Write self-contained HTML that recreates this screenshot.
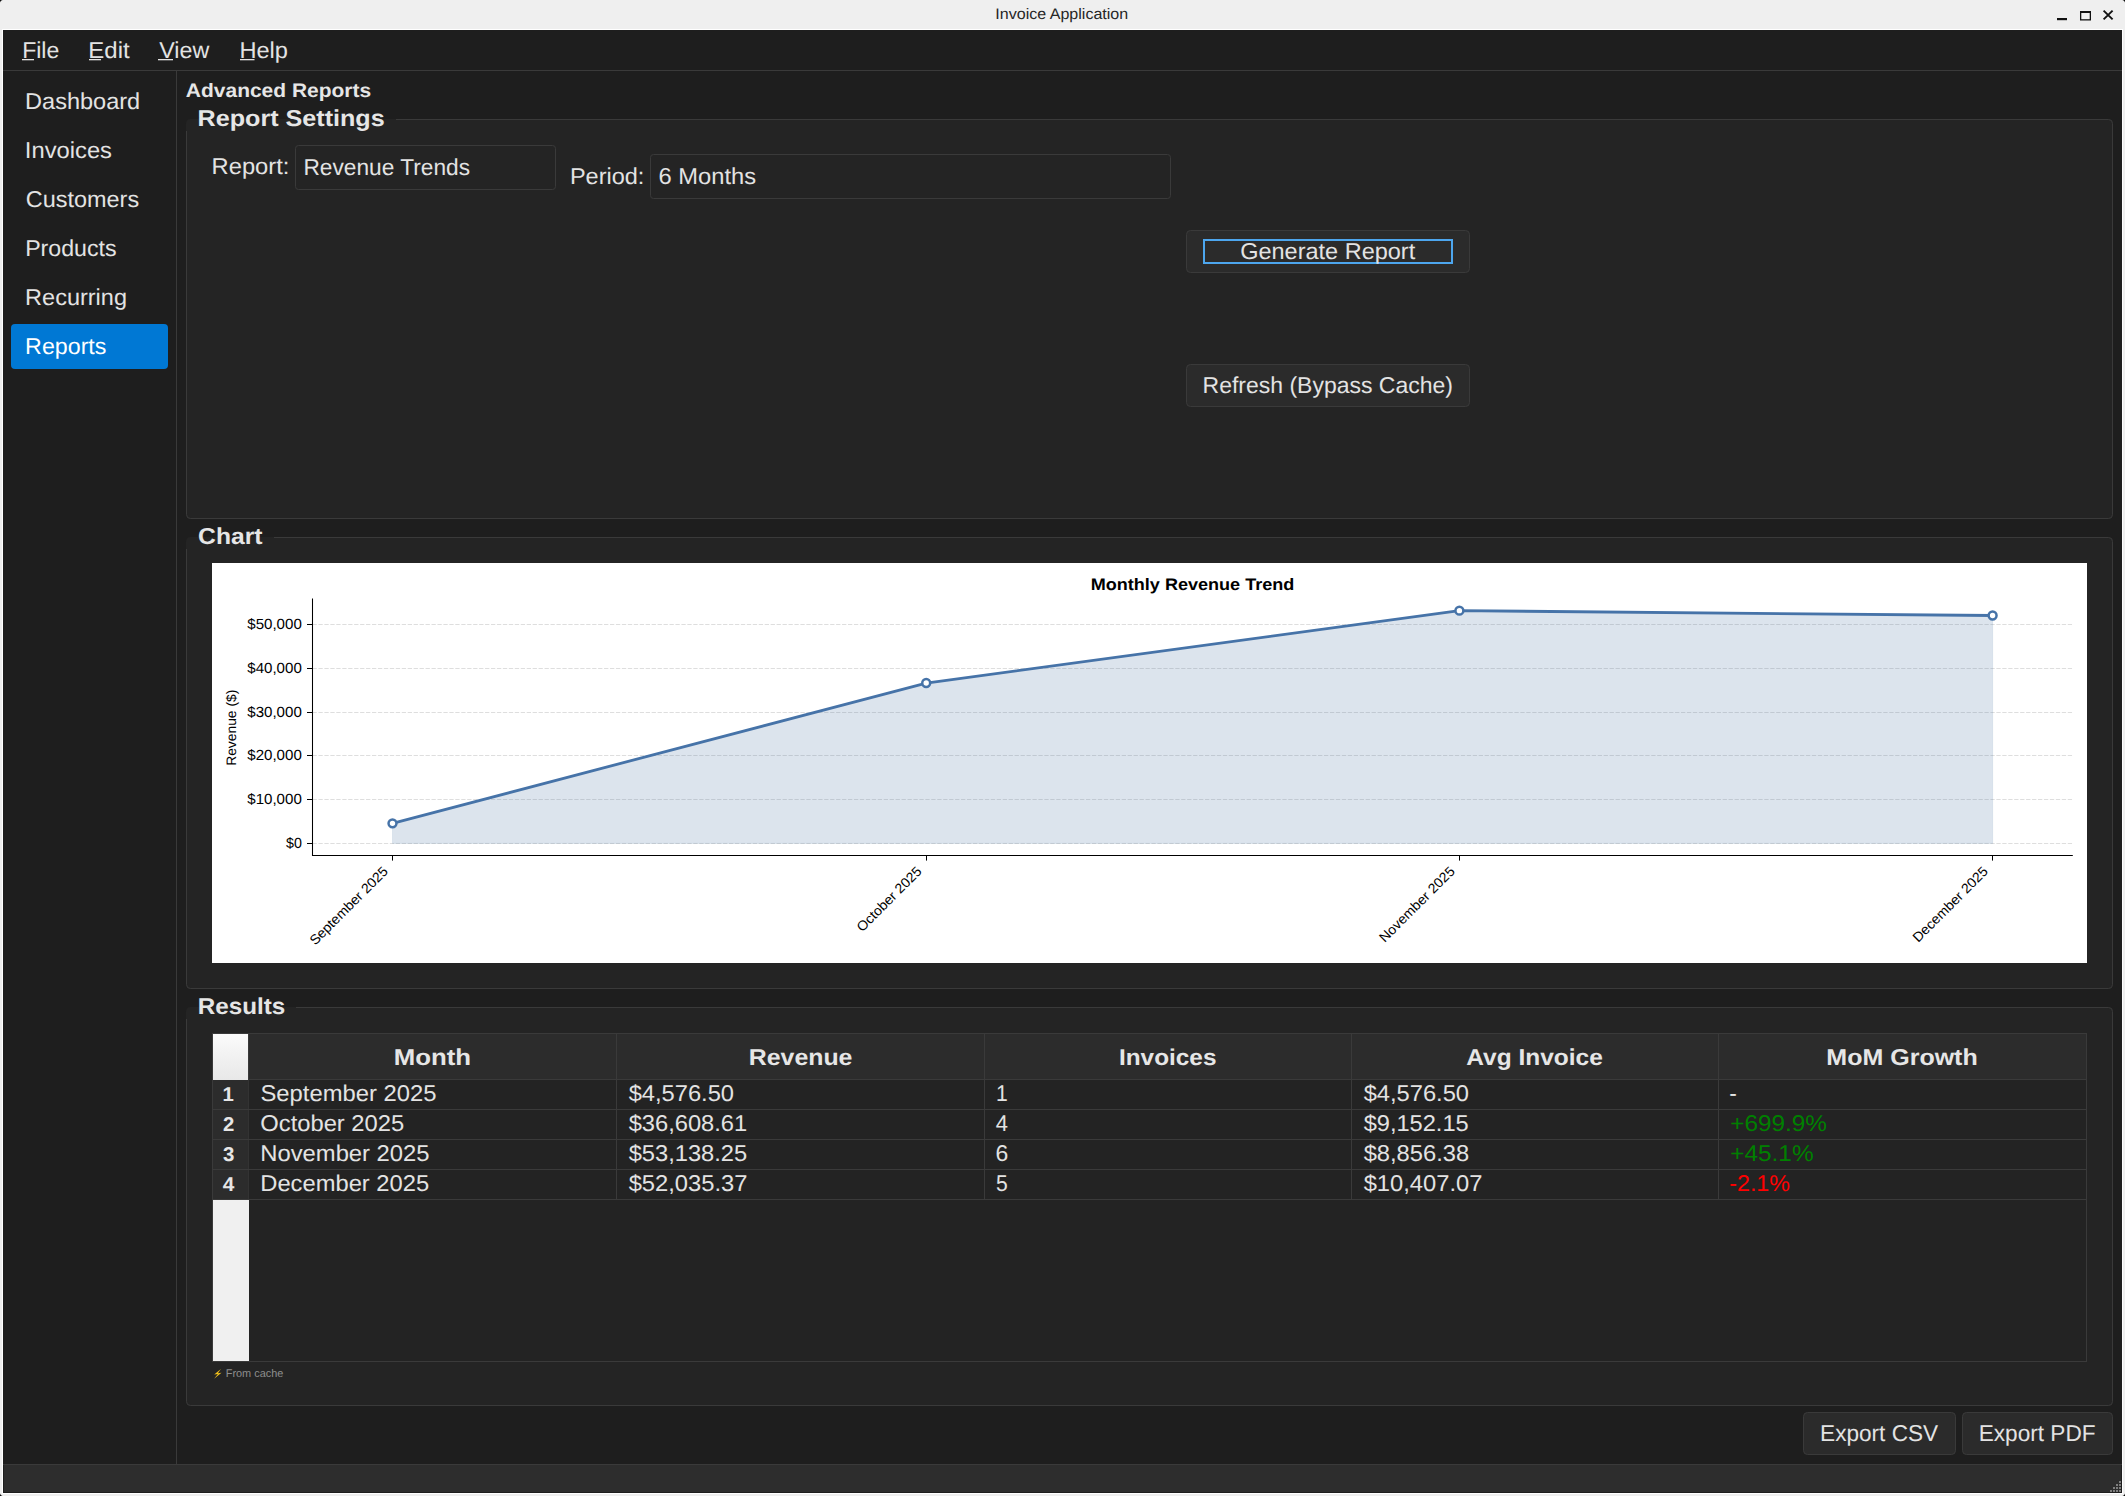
<!DOCTYPE html>
<html><head><meta charset="utf-8"><title>Invoice Application</title>
<style>
html,body{margin:0;padding:0;background:#efefef;overflow:hidden;}
svg{display:block;}
text{font-family:"Liberation Sans",sans-serif;}
</style></head>
<body>
<svg width="2125" height="1496" viewBox="0 0 2125 1496" text-rendering="geometricPrecision">
<rect x="0.00" y="0.00" width="2125.00" height="1496.00" fill="#efefef"/>
<text x="995.36" y="19.20" font-size="15.25" fill="#262626" textLength="132.86" lengthAdjust="spacingAndGlyphs">Invoice Application</text>
<rect x="2057.00" y="18.00" width="10.00" height="2.20" fill="#111"/>
<rect x="2080.65" y="11.65" width="9.70" height="8.20" fill="none" stroke="#111" stroke-width="1.3"/>
<rect x="2080.00" y="11.00" width="11.00" height="2.00" fill="#111"/>
<path d="M2103.6 10.6 L2112.6 19.4 M2112.6 10.6 L2103.6 19.4" stroke="#111" stroke-width="1.9" fill="none"/>
<rect x="2.00" y="29.00" width="2121.00" height="1465.00" fill="#ffffff"/>
<rect x="3.00" y="30.00" width="2119.00" height="1463.00" fill="#1e1e1e"/>
<line x1="3.00" y1="70.50" x2="2122.00" y2="70.50" stroke="#3a3a3a" stroke-width="1"/>
<text x="22.15" y="57.90" font-size="23.00" fill="#e3e3e3" textLength="37.20" lengthAdjust="spacingAndGlyphs">File</text>
<rect x="22.00" y="59.00" width="12.00" height="1.30" fill="#e3e3e3"/>
<text x="88.38" y="57.90" font-size="23.00" fill="#e3e3e3" textLength="41.31" lengthAdjust="spacingAndGlyphs">Edit</text>
<rect x="89.00" y="59.00" width="12.00" height="1.30" fill="#e3e3e3"/>
<text x="159.28" y="57.90" font-size="23.00" fill="#e3e3e3" textLength="50.01" lengthAdjust="spacingAndGlyphs">View</text>
<rect x="158.00" y="59.00" width="15.00" height="1.30" fill="#e3e3e3"/>
<text x="239.41" y="57.90" font-size="23.00" fill="#e3e3e3" textLength="48.57" lengthAdjust="spacingAndGlyphs">Help</text>
<rect x="240.00" y="59.00" width="14.50" height="1.30" fill="#e3e3e3"/>
<line x1="176.50" y1="71.00" x2="176.50" y2="1464.00" stroke="#3a3a3a" stroke-width="1"/>
<rect x="11.00" y="324.00" width="157.00" height="45.00" fill="#0078d4" rx="4"/>
<text x="25.12" y="109.00" font-size="23.00" fill="#e3e3e3" textLength="115.05" lengthAdjust="spacingAndGlyphs">Dashboard</text>
<text x="24.86" y="158.05" font-size="23.00" fill="#e3e3e3" textLength="87.13" lengthAdjust="spacingAndGlyphs">Invoices</text>
<text x="25.83" y="207.10" font-size="23.00" fill="#e3e3e3" textLength="113.28" lengthAdjust="spacingAndGlyphs">Customers</text>
<text x="25.15" y="256.15" font-size="23.00" fill="#e3e3e3" textLength="91.50" lengthAdjust="spacingAndGlyphs">Products</text>
<text x="25.12" y="305.20" font-size="23.00" fill="#e3e3e3" textLength="101.89" lengthAdjust="spacingAndGlyphs">Recurring</text>
<text x="25.14" y="354.25" font-size="23.00" fill="#ffffff" textLength="81.31" lengthAdjust="spacingAndGlyphs">Reports</text>
<text x="185.88" y="96.90" font-size="19.48" font-weight="bold" fill="#e6e6e6" textLength="185.28" lengthAdjust="spacingAndGlyphs">Advanced Reports</text>
<rect x="186.00" y="119.00" width="1927.00" height="400.00" fill="#242424" rx="4.5"/>
<path d="M396.0 119.5 H2108.5 A4 4 0 0 1 2112.5 123.5 V514.5 A4 4 0 0 1 2108.5 518.5 H190.5 A4 4 0 0 1 186.5 514.5 V131" fill="none" stroke="#3a3a3a" stroke-width="1"/>
<text x="197.57" y="125.80" font-size="23.00" font-weight="bold" fill="#e6e6e6" textLength="187.14" lengthAdjust="spacingAndGlyphs">Report Settings</text>
<rect x="186.00" y="537.00" width="1927.00" height="452.00" fill="#242424" rx="4.5"/>
<path d="M274.0 537.5 H2108.5 A4 4 0 0 1 2112.5 541.5 V984.5 A4 4 0 0 1 2108.5 988.5 H190.5 A4 4 0 0 1 186.5 984.5 V549" fill="none" stroke="#3a3a3a" stroke-width="1"/>
<text x="198.11" y="543.90" font-size="23.00" font-weight="bold" fill="#e6e6e6" textLength="64.37" lengthAdjust="spacingAndGlyphs">Chart</text>
<rect x="186.00" y="1007.00" width="1927.00" height="399.00" fill="#242424" rx="4.5"/>
<path d="M296.0 1007.5 H2108.5 A4 4 0 0 1 2112.5 1011.5 V1401.5 A4 4 0 0 1 2108.5 1405.5 H190.5 A4 4 0 0 1 186.5 1401.5 V1019" fill="none" stroke="#3a3a3a" stroke-width="1"/>
<text x="197.73" y="1014.30" font-size="23.00" font-weight="bold" fill="#e6e6e6" textLength="87.50" lengthAdjust="spacingAndGlyphs">Results</text>
<text x="211.60" y="174.40" font-size="23.00" fill="#e3e3e3" textLength="77.82" lengthAdjust="spacingAndGlyphs">Report:</text>
<rect x="295.50" y="145.50" width="260.00" height="44.00" fill="#242424" rx="3" stroke="#3a3a3a" stroke-width="1"/>
<text x="303.38" y="174.90" font-size="23.00" fill="#e3e3e3" textLength="166.67" lengthAdjust="spacingAndGlyphs">Revenue Trends</text>
<text x="569.92" y="183.60" font-size="23.00" fill="#e3e3e3" textLength="74.46" lengthAdjust="spacingAndGlyphs">Period:</text>
<rect x="650.50" y="154.50" width="520.00" height="44.00" fill="#242424" rx="3" stroke="#3a3a3a" stroke-width="1"/>
<text x="658.51" y="184.20" font-size="23.00" fill="#e3e3e3" textLength="97.58" lengthAdjust="spacingAndGlyphs">6 Months</text>
<rect x="1186.50" y="230.50" width="283.00" height="42.00" fill="#2b2b2b" rx="4" stroke="#3a3a3a" stroke-width="1"/>
<rect x="1204.00" y="240.00" width="248.00" height="23.00" fill="none" stroke="#4da6ee" stroke-width="2"/>
<text x="1240.23" y="259.10" font-size="23.00" fill="#e3e3e3" textLength="174.98" lengthAdjust="spacingAndGlyphs">Generate Report</text>
<rect x="1186.50" y="364.50" width="283.00" height="42.00" fill="#2b2b2b" rx="4" stroke="#3a3a3a" stroke-width="1"/>
<text x="1202.56" y="392.90" font-size="23.00" fill="#e3e3e3" textLength="250.40" lengthAdjust="spacingAndGlyphs">Refresh (Bypass Cache)</text>
<rect x="212.00" y="563.00" width="1875.00" height="400.00" fill="#ffffff"/>
<line x1="312.50" y1="843.50" x2="2072.80" y2="843.50" stroke="#dadada" stroke-width="0.9" stroke-dasharray="4.3 1.65"/>
<line x1="312.50" y1="799.50" x2="2072.80" y2="799.50" stroke="#dadada" stroke-width="0.9" stroke-dasharray="4.3 1.65"/>
<line x1="312.50" y1="755.50" x2="2072.80" y2="755.50" stroke="#dadada" stroke-width="0.9" stroke-dasharray="4.3 1.65"/>
<line x1="312.50" y1="712.50" x2="2072.80" y2="712.50" stroke="#dadada" stroke-width="0.9" stroke-dasharray="4.3 1.65"/>
<line x1="312.50" y1="668.50" x2="2072.80" y2="668.50" stroke="#dadada" stroke-width="0.9" stroke-dasharray="4.3 1.65"/>
<line x1="312.50" y1="624.50" x2="2072.80" y2="624.50" stroke="#dadada" stroke-width="0.9" stroke-dasharray="4.3 1.65"/>
<polygon points="392.5,823.35 926.2,683.05 1459.4,610.65 1992.6,615.49 1992.6,843.4 392.5,843.4" fill="#4e79a7" fill-opacity="0.2" stroke="#4e79a7" stroke-opacity="0.12" stroke-width="1"/>
<polyline points="392.5,823.35 926.2,683.05 1459.4,610.65 1992.6,615.49" fill="none" stroke="#4673a8" stroke-width="2.8" stroke-linejoin="round"/>
<circle cx="392.5" cy="823.35" r="3.95" fill="#ffffff" stroke="#4673a8" stroke-width="2.5"/>
<circle cx="926.2" cy="683.05" r="3.95" fill="#ffffff" stroke="#4673a8" stroke-width="2.5"/>
<circle cx="1459.4" cy="610.65" r="3.95" fill="#ffffff" stroke="#4673a8" stroke-width="2.5"/>
<circle cx="1992.6" cy="615.49" r="3.95" fill="#ffffff" stroke="#4673a8" stroke-width="2.5"/>
<line x1="312.50" y1="598.40" x2="312.50" y2="856.00" stroke="#000" stroke-width="1.05"/>
<line x1="312.00" y1="855.50" x2="2072.80" y2="855.50" stroke="#000" stroke-width="1.05"/>
<line x1="307.00" y1="843.50" x2="312.50" y2="843.50" stroke="#000" stroke-width="1.05"/>
<text x="285.97" y="848.00" font-size="14.72" fill="#000" textLength="15.86" lengthAdjust="spacingAndGlyphs">$0</text>
<line x1="307.00" y1="799.50" x2="312.50" y2="799.50" stroke="#000" stroke-width="1.05"/>
<text x="247.28" y="804.00" font-size="14.72" fill="#000" textLength="54.54" lengthAdjust="spacingAndGlyphs">$10,000</text>
<line x1="307.00" y1="755.50" x2="312.50" y2="755.50" stroke="#000" stroke-width="1.05"/>
<text x="247.28" y="760.00" font-size="14.72" fill="#000" textLength="54.54" lengthAdjust="spacingAndGlyphs">$20,000</text>
<line x1="307.00" y1="712.50" x2="312.50" y2="712.50" stroke="#000" stroke-width="1.05"/>
<text x="247.28" y="717.00" font-size="14.72" fill="#000" textLength="54.54" lengthAdjust="spacingAndGlyphs">$30,000</text>
<line x1="307.00" y1="668.50" x2="312.50" y2="668.50" stroke="#000" stroke-width="1.05"/>
<text x="247.28" y="673.00" font-size="14.72" fill="#000" textLength="54.54" lengthAdjust="spacingAndGlyphs">$40,000</text>
<line x1="307.00" y1="624.50" x2="312.50" y2="624.50" stroke="#000" stroke-width="1.05"/>
<text x="247.28" y="629.00" font-size="14.72" fill="#000" textLength="54.54" lengthAdjust="spacingAndGlyphs">$50,000</text>
<line x1="392.50" y1="855.50" x2="392.50" y2="860.60" stroke="#000" stroke-width="1.05"/>
<line x1="926.50" y1="855.50" x2="926.50" y2="860.60" stroke="#000" stroke-width="1.05"/>
<line x1="1459.50" y1="855.50" x2="1459.50" y2="860.60" stroke="#000" stroke-width="1.05"/>
<line x1="1992.50" y1="855.50" x2="1992.50" y2="860.60" stroke="#000" stroke-width="1.05"/>
<text x="1090.69" y="590.00" font-size="16.62" font-weight="bold" fill="#000" textLength="203.61" lengthAdjust="spacingAndGlyphs">Monthly Revenue Trend</text>
<g transform="translate(236.2,727.65) rotate(-90)"><text x="-38.19" y="0.00" font-size="13.71" fill="#000" textLength="76.15" lengthAdjust="spacingAndGlyphs">Revenue ($)</text></g>
<g transform="translate(388.40,872.6) rotate(-45)"><text x="-103.63" y="0.00" font-size="13.66" fill="#000" textLength="104.19" lengthAdjust="spacingAndGlyphs">September 2025</text></g>
<g transform="translate(922.10,872.6) rotate(-45)"><text x="-84.70" y="0.00" font-size="13.66" fill="#000" textLength="85.25" lengthAdjust="spacingAndGlyphs">October 2025</text></g>
<g transform="translate(1455.30,872.6) rotate(-45)"><text x="-99.69" y="0.00" font-size="13.66" fill="#000" textLength="100.26" lengthAdjust="spacingAndGlyphs">November 2025</text></g>
<g transform="translate(1988.50,872.6) rotate(-45)"><text x="-99.44" y="0.00" font-size="13.66" fill="#000" textLength="100.01" lengthAdjust="spacingAndGlyphs">December 2025</text></g>
<rect x="212.50" y="1033.50" width="1874.00" height="328.00" fill="#232323" stroke="#3a3a3a" stroke-width="1"/>
<rect x="249.00" y="1034.00" width="1837.00" height="45.50" fill="#2c2c2c"/>
<defs><linearGradient id="cg" x1="0" y1="0" x2="0" y2="1"><stop offset="0" stop-color="#fbfbfb"/><stop offset="0.5" stop-color="#f1f1f1"/><stop offset="1" stop-color="#e8e8e8"/></linearGradient></defs>
<rect x="213.00" y="1034.00" width="36.00" height="46.00" fill="url(#cg)"/>
<rect x="213.00" y="1200.00" width="36.00" height="161.00" fill="#f0f0f0"/>
<line x1="249.00" y1="1079.50" x2="2086.00" y2="1079.50" stroke="#3a3a3a" stroke-width="1"/>
<line x1="616.50" y1="1034.00" x2="616.50" y2="1200.00" stroke="#3a3a3a" stroke-width="1"/>
<line x1="984.50" y1="1034.00" x2="984.50" y2="1200.00" stroke="#3a3a3a" stroke-width="1"/>
<line x1="1351.50" y1="1034.00" x2="1351.50" y2="1200.00" stroke="#3a3a3a" stroke-width="1"/>
<line x1="1718.50" y1="1034.00" x2="1718.50" y2="1200.00" stroke="#3a3a3a" stroke-width="1"/>
<line x1="248.50" y1="1034.00" x2="248.50" y2="1200.00" stroke="#3a3a3a" stroke-width="1"/>
<rect x="213.00" y="1080.00" width="35.50" height="29.50" fill="#2c2c2c"/>
<line x1="212.00" y1="1109.50" x2="2086.00" y2="1109.50" stroke="#3a3a3a" stroke-width="1"/>
<text x="222.59" y="1101.30" font-size="19.90" font-weight="bold" fill="#e6e6e6" textLength="11.32" lengthAdjust="spacingAndGlyphs">1</text>
<text x="260.50" y="1101.40" font-size="22.76" fill="#e3e3e3" textLength="175.87" lengthAdjust="spacingAndGlyphs">September 2025</text>
<text x="628.65" y="1101.40" font-size="22.76" fill="#e3e3e3" textLength="105.38" lengthAdjust="spacingAndGlyphs">$4,576.50</text>
<text x="995.94" y="1101.40" font-size="22.76" fill="#e3e3e3" textLength="11.74" lengthAdjust="spacingAndGlyphs">1</text>
<text x="1363.65" y="1101.40" font-size="22.76" fill="#e3e3e3" textLength="105.38" lengthAdjust="spacingAndGlyphs">$4,576.50</text>
<text x="1729.23" y="1101.40" font-size="22.76" fill="#e3e3e3" textLength="7.60" lengthAdjust="spacingAndGlyphs">-</text>
<rect x="213.00" y="1110.00" width="35.50" height="29.50" fill="#2c2c2c"/>
<line x1="212.00" y1="1139.50" x2="2086.00" y2="1139.50" stroke="#3a3a3a" stroke-width="1"/>
<text x="223.01" y="1131.30" font-size="19.90" font-weight="bold" fill="#e6e6e6" textLength="11.30" lengthAdjust="spacingAndGlyphs">2</text>
<text x="260.29" y="1131.40" font-size="22.76" fill="#e3e3e3" textLength="143.91" lengthAdjust="spacingAndGlyphs">October 2025</text>
<text x="628.65" y="1131.40" font-size="22.76" fill="#e3e3e3" textLength="118.51" lengthAdjust="spacingAndGlyphs">$36,608.61</text>
<text x="995.82" y="1131.40" font-size="22.76" fill="#e3e3e3" textLength="12.20" lengthAdjust="spacingAndGlyphs">4</text>
<text x="1363.65" y="1131.40" font-size="22.76" fill="#e3e3e3" textLength="105.07" lengthAdjust="spacingAndGlyphs">$9,152.15</text>
<text x="1730.20" y="1131.40" font-size="22.76" fill="#008000" textLength="96.82" lengthAdjust="spacingAndGlyphs">+699.9%</text>
<rect x="213.00" y="1140.00" width="35.50" height="29.50" fill="#2c2c2c"/>
<line x1="212.00" y1="1169.50" x2="2086.00" y2="1169.50" stroke="#3a3a3a" stroke-width="1"/>
<text x="223.09" y="1161.30" font-size="19.90" font-weight="bold" fill="#e6e6e6" textLength="11.36" lengthAdjust="spacingAndGlyphs">3</text>
<text x="260.30" y="1161.40" font-size="22.76" fill="#e3e3e3" textLength="169.24" lengthAdjust="spacingAndGlyphs">November 2025</text>
<text x="628.65" y="1161.40" font-size="22.76" fill="#e3e3e3" textLength="118.50" lengthAdjust="spacingAndGlyphs">$53,138.25</text>
<text x="995.53" y="1161.40" font-size="22.76" fill="#e3e3e3" textLength="12.74" lengthAdjust="spacingAndGlyphs">6</text>
<text x="1363.65" y="1161.40" font-size="22.76" fill="#e3e3e3" textLength="105.50" lengthAdjust="spacingAndGlyphs">$8,856.38</text>
<text x="1730.20" y="1161.40" font-size="22.76" fill="#008000" textLength="83.40" lengthAdjust="spacingAndGlyphs">+45.1%</text>
<rect x="213.00" y="1170.00" width="35.50" height="29.50" fill="#2c2c2c"/>
<line x1="212.00" y1="1199.50" x2="2086.00" y2="1199.50" stroke="#3a3a3a" stroke-width="1"/>
<text x="222.72" y="1191.30" font-size="19.90" font-weight="bold" fill="#e6e6e6" textLength="11.57" lengthAdjust="spacingAndGlyphs">4</text>
<text x="260.31" y="1191.40" font-size="22.76" fill="#e3e3e3" textLength="168.81" lengthAdjust="spacingAndGlyphs">December 2025</text>
<text x="628.65" y="1191.40" font-size="22.76" fill="#e3e3e3" textLength="118.74" lengthAdjust="spacingAndGlyphs">$52,035.37</text>
<text x="995.94" y="1191.40" font-size="22.76" fill="#e3e3e3" textLength="11.74" lengthAdjust="spacingAndGlyphs">5</text>
<text x="1363.65" y="1191.40" font-size="22.76" fill="#e3e3e3" textLength="118.74" lengthAdjust="spacingAndGlyphs">$10,407.07</text>
<text x="1729.21" y="1191.40" font-size="22.76" fill="#ff0000" textLength="60.77" lengthAdjust="spacingAndGlyphs">-2.1%</text>
<text x="393.72" y="1064.70" font-size="23.00" font-weight="bold" fill="#e6e6e6" textLength="77.29" lengthAdjust="spacingAndGlyphs">Month</text>
<text x="748.78" y="1064.70" font-size="23.00" font-weight="bold" fill="#e6e6e6" textLength="103.65" lengthAdjust="spacingAndGlyphs">Revenue</text>
<text x="1118.99" y="1064.70" font-size="22.76" font-weight="bold" fill="#e6e6e6" textLength="97.45" lengthAdjust="spacingAndGlyphs">Invoices</text>
<text x="1466.29" y="1064.70" font-size="23.00" font-weight="bold" fill="#e6e6e6" textLength="136.47" lengthAdjust="spacingAndGlyphs">Avg Invoice</text>
<text x="1826.38" y="1064.70" font-size="23.00" font-weight="bold" fill="#e6e6e6" textLength="151.31" lengthAdjust="spacingAndGlyphs">MoM Growth</text>
<path d="M220.9 1369.1 L214.2 1374.5 L217.9 1374.1 L214.1 1378.8 L221.5 1372.8 L217.9 1373.2 Z" fill="#f4c21b"/>
<text x="225.73" y="1377.20" font-size="11.12" fill="#8e8e8e" textLength="57.71" lengthAdjust="spacingAndGlyphs">From cache</text>
<rect x="1803.50" y="1412.50" width="152.00" height="42.00" fill="#2b2b2b" rx="4" stroke="#3a3a3a" stroke-width="1"/>
<text x="1820.09" y="1441.40" font-size="23.00" fill="#e3e3e3" textLength="118.00" lengthAdjust="spacingAndGlyphs">Export CSV</text>
<rect x="1962.50" y="1412.50" width="150.00" height="42.00" fill="#2b2b2b" rx="4" stroke="#3a3a3a" stroke-width="1"/>
<text x="1978.69" y="1441.40" font-size="23.00" fill="#e3e3e3" textLength="116.88" lengthAdjust="spacingAndGlyphs">Export PDF</text>
<rect x="4.00" y="1465.00" width="2117.00" height="27.00" fill="#2d2d2d"/>
<line x1="3.00" y1="1464.50" x2="2122.00" y2="1464.50" stroke="#3a3a3a" stroke-width="1"/>
<rect x="2119.00" y="1481.00" width="2.00" height="2.00" fill="#7e7e7e"/>
<rect x="2116.00" y="1484.00" width="2.00" height="2.00" fill="#7e7e7e"/>
<rect x="2119.00" y="1484.00" width="2.00" height="2.00" fill="#7e7e7e"/>
<rect x="2113.00" y="1487.00" width="2.00" height="2.00" fill="#7e7e7e"/>
<rect x="2116.00" y="1487.00" width="2.00" height="2.00" fill="#7e7e7e"/>
<rect x="2119.00" y="1487.00" width="2.00" height="2.00" fill="#7e7e7e"/>
<rect x="2110.00" y="1490.00" width="2.00" height="2.00" fill="#7e7e7e"/>
<rect x="2113.00" y="1490.00" width="2.00" height="2.00" fill="#7e7e7e"/>
<rect x="2116.00" y="1490.00" width="2.00" height="2.00" fill="#7e7e7e"/>
<rect x="2119.00" y="1490.00" width="2.00" height="2.00" fill="#7e7e7e"/>
<path d="M0 0 H2.6 Q0.4 0.4 0 2.6 Z" fill="#000"/>
<path d="M2125 0 V2.6 Q2124.6 0.4 2122.4 0 Z" fill="#000"/>
<path d="M0 1496 V1493.4 Q0.4 1495.6 2.6 1496 Z" fill="#000"/>
<path d="M2125 1496 H2122.4 Q2124.6 1495.6 2125 1493.4 Z" fill="#000"/>
</svg>
</body></html>
